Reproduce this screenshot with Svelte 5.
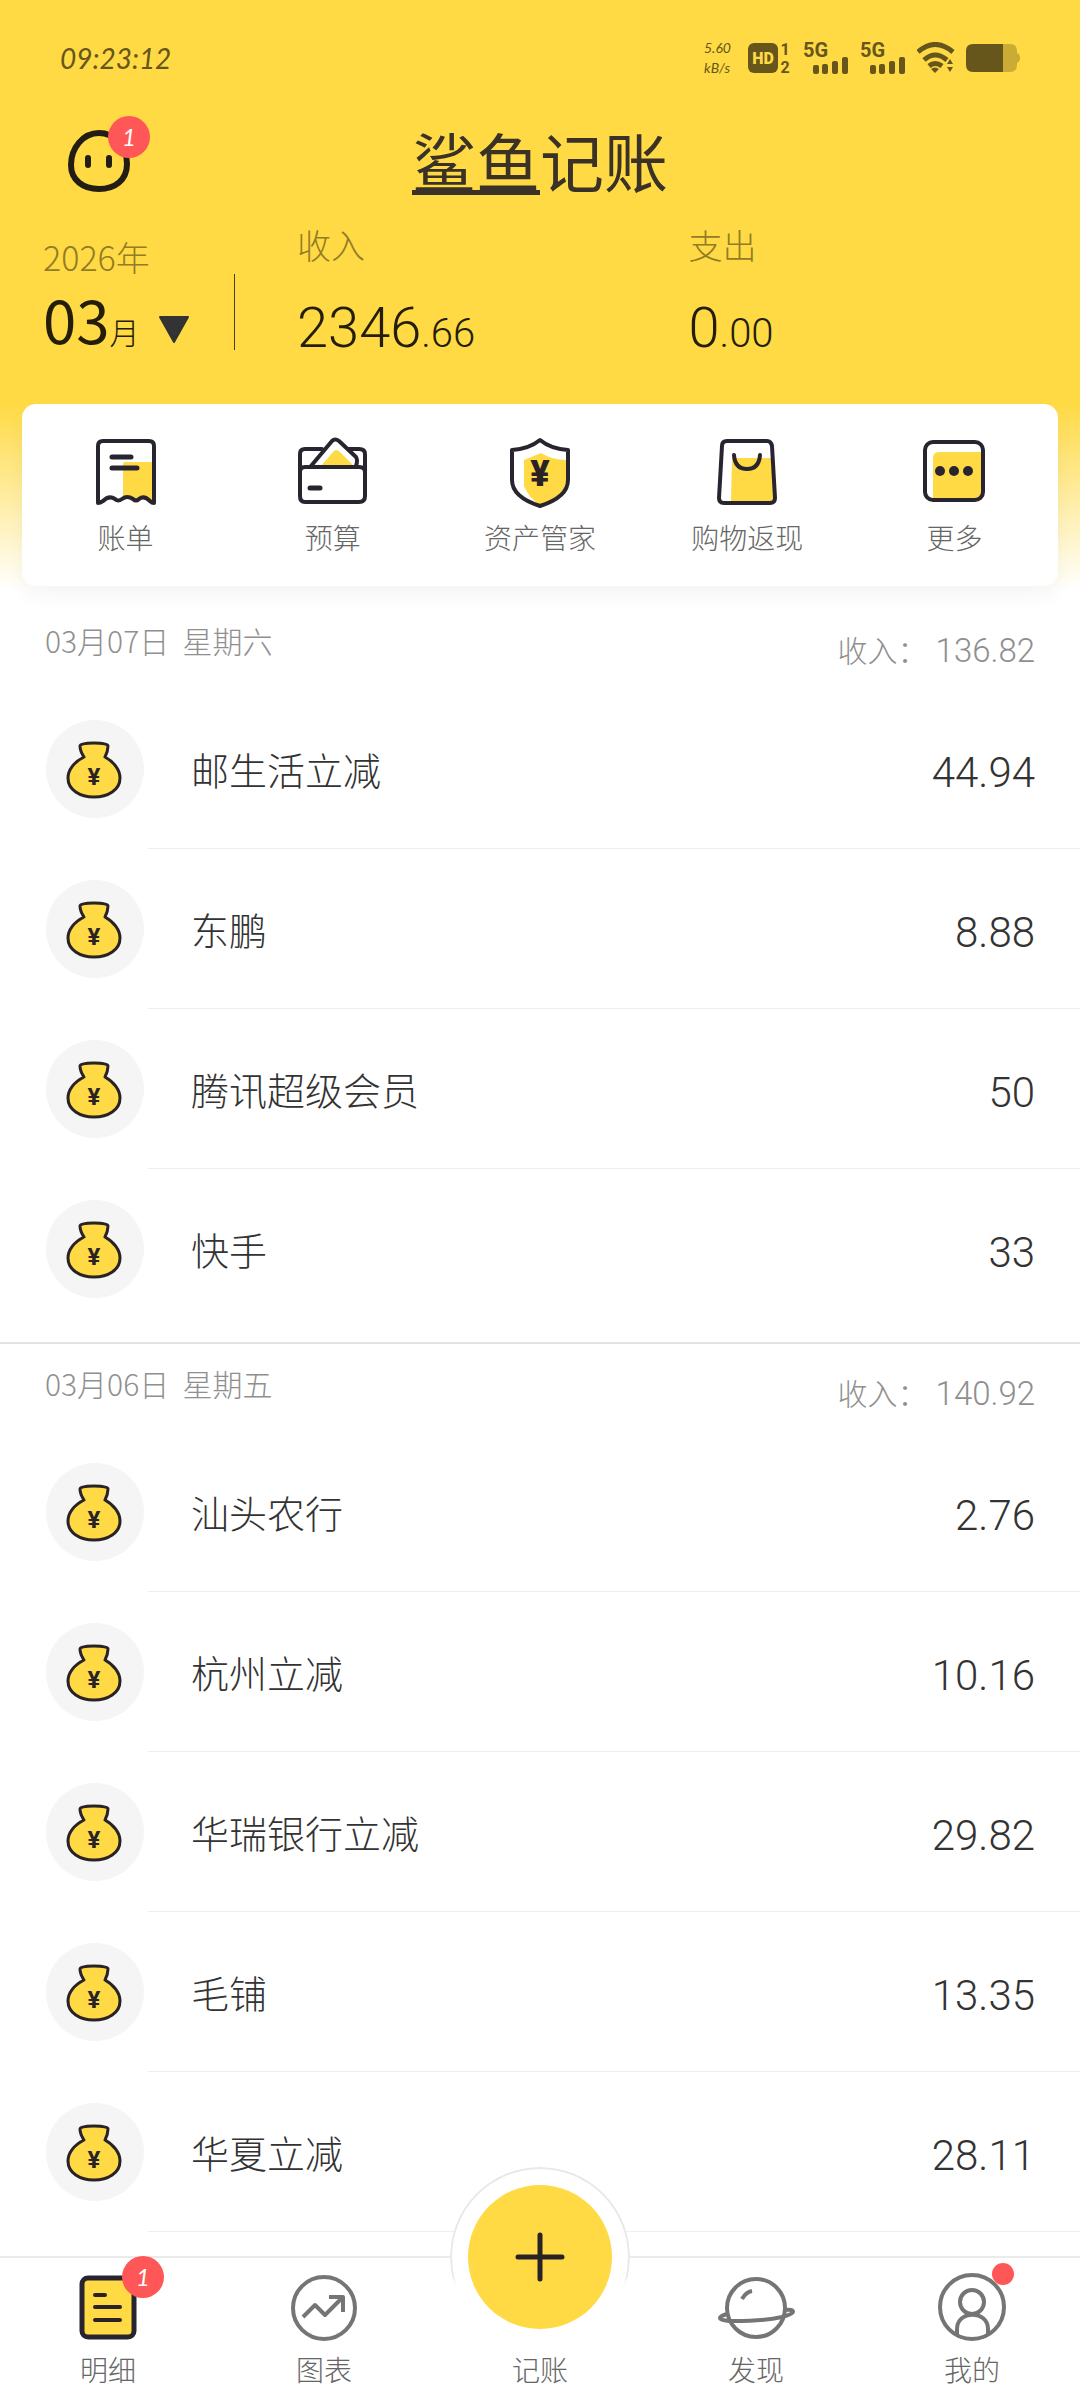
<script lang="ts">
	type Entry = { name: string; amount: string };
	type Day = { date: string; weekday: string; income: string; entries: Entry[] };

	let activeTab = $state('明细');

	const shortcuts = ['账单', '预算', '资产管家', '购物返现', '更多'];
	const tabs = ['明细', '图表', '记账', '发现', '我的'];

	const days: Day[] = [
		{
			date: '03月07日',
			weekday: '星期六',
			income: '136.82',
			entries: [
				{ name: '邮生活立减', amount: '44.94' },
				{ name: '东鹏', amount: '8.88' },
				{ name: '腾讯超级会员', amount: '50' },
				{ name: '快手', amount: '33' }
			]
		},
		{
			date: '03月06日',
			weekday: '星期五',
			income: '140.92',
			entries: [
				{ name: '汕头农行', amount: '2.76' },
				{ name: '杭州立减', amount: '10.16' },
				{ name: '华瑞银行立减', amount: '29.82' },
				{ name: '毛铺', amount: '13.35' },
				{ name: '华夏立减', amount: '28.11' }
			]
		}
	];
</script>

{#snippet signal()}
	<svg class="signal" viewBox="0 0 46 44" aria-hidden="true">
		<text x="0" y="21" class="sim">5G</text>
		<rect x="10" y="29" width="6" height="9" rx="2" />
		<rect x="19" y="28" width="6" height="10" rx="2" />
		<rect x="29" y="25" width="6" height="13" rx="2" />
		<rect x="39" y="21" width="6" height="17" rx="2" />
	</svg>
{/snippet}

<div class="app">
	<header class="hero">
		<div class="status">
			<time>09:23:12</time>
			<div class="status-icons">
				<div class="speed"><span>5.60</span><span>kB/s</span></div>
				<svg class="hd" viewBox="0 0 44 44" aria-hidden="true">
					<rect x="0" y="7" width="30" height="30" rx="6" />
					<text x="15" y="28" class="hd-label" text-anchor="middle">HD</text>
					<text x="37" y="19" class="sim-no" text-anchor="middle">1</text>
					<text x="37" y="37" class="sim-no" text-anchor="middle">2</text>
				</svg>
				{@render signal()}
				{@render signal()}
				<svg class="wifi" viewBox="0 0 38 32" aria-hidden="true">
					<g fill="none" stroke="currentColor" stroke-width="5">
						<path d="M1 10 Q18 -5 36 10" />
						<path d="M7 18 Q18 8 30 18" />
						<path d="M12 24 Q18 19 25 24" />
					</g>
					<path d="M14 27 Q18 24 22 27 L18 31 Z" />
					<path d="M30 22 L33 17 L36 22 Z M30 25 L33 30 L36 25 Z" />
				</svg>
				<svg class="battery" viewBox="0 0 54 28" aria-hidden="true">
					<path opacity="0.35" d="M37 0 H44 Q51 0 51 7 V9 Q54 10 54 14 Q54 18 51 19 V21 Q51 28 44 28 H37 Z" />
					<path d="M7 0 H37 V28 H7 Q0 28 0 21 V7 Q0 0 7 0 Z" />
				</svg>
			</div>
		</div>

		<div class="title-bar">
			<button class="face" aria-label="消息">
				<svg viewBox="0 0 62 62" aria-hidden="true">
					<path d="M31 3 C46 3 59 16 59 34 C59 50 47 59 31 59 C15 59 3 50 3 35 C3 18 15 3 31 3 Z" fill="none" stroke="#231d14" stroke-width="6" />
					<rect x="17" y="25" width="6" height="13" rx="3" fill="#231d14" />
					<rect x="38" y="25" width="6" height="13" rx="3" fill="#231d14" />
				</svg>
				<span class="badge">1</span>
			</button>
			<h1><span class="shark">鲨鱼</span>记账</h1>
		</div>

		<div class="summary">
			<button class="month">
				<span class="year">2026年</span>
				<span class="month-value">
					<span class="month-no">03</span>
					<span class="month-unit">月</span>
					<svg class="caret" viewBox="0 0 32 28" aria-hidden="true">
						<path d="M2 1 H30 L16 26 Z" fill="#333" stroke="#333" stroke-width="2" stroke-linejoin="round" />
					</svg>
				</span>
			</button>
			<div class="total">
				<span class="total-label">收入</span>
				<span class="total-value">2346<small>.66</small></span>
			</div>
			<div class="total">
				<span class="total-label">支出</span>
				<span class="total-value">0<small>.00</small></span>
			</div>
		</div>

		<nav class="shortcuts">
			{#each shortcuts as label, i}
				<button class="shortcut">
					<svg viewBox="0 0 72 72" aria-hidden="true">
						{#if i === 0}
							<path d="M33 27 Q33 25 35 25 H63 V62 L58 64 L53 60 L46 64 L39 60 L33 63 Z" class="fill" />
							<path d="M8 66 V9 Q8 4 13 4 H59 Q64 4 64 9 V66 Q62 66 60 64 Q54 58 49 62 Q46 65 43 62 Q37 58 32 62 Q28 65 25 62 Q19 58 13 64 Q10 66 8 66 Z" class="line" />
							<path d="M22 20 H41 M22 31 H47" class="line thick" />
						{:else if i === 1}
							<path d="M24 29 L36 15 Q39 11 43 15 L57 29 Z" class="fill" />
							<path d="M25 12 H8 Q3 12 3 17 V59 Q3 65 8 65 H62 Q68 65 68 59 V17 Q68 12 62 12 H52" class="line" />
							<path d="M14 29 L35 4 Q38 1 42 4 L59 20 Q61 23 59 29" class="line" />
							<path d="M3 35 Q3 30 8 30 H62 Q68 30 68 35" class="line" />
							<path d="M13 51 H23" class="line thick" />
						{:else if i === 2}
							<path d="M20 23 Q32 18 37 16 Q48 23 62 23 V45 Q58 61 37 69 Q24 60 20 49 Z" class="fill" />
							<path d="M36 3 Q25 12 8 13 V43 Q8 60 36 69 Q64 60 64 43 V13 Q47 12 36 3 Z" class="line" />
							<text x="36" y="49" class="yen shield-yen" text-anchor="middle">¥</text>
						{:else if i === 3}
							<path d="M21 21 H60 L63 64 H20 Z" class="fill" />
							<path d="M16 4 H56 Q60 4 61 9 L64 61 Q64 66 59 66 H13 Q8 66 8 61 L11 9 Q11 4 16 4 Z" class="line" />
							<path d="M23 18 Q24 32 36 32 Q48 32 49 18" class="line" />
						{:else}
							<path d="M15 63 V21 Q15 15 21 15 H64 V63 Z" class="fill" />
							<rect x="7" y="5" width="58" height="58" rx="8" class="line" />
							<g fill="#292530">
								<circle cx="22" cy="34" r="5" />
								<circle cx="36" cy="34" r="5" />
								<circle cx="50" cy="34" r="5" />
							</g>
						{/if}
					</svg>
					<span>{label}</span>
				</button>
			{/each}
		</nav>
	</header>

	<main>
		{#each days as day}
			<section class="day">
				<div class="day-head">
					<h2>{day.date}&nbsp; {day.weekday}</h2>
					<p><span>收入：</span>{day.income}</p>
				</div>
				<ul>
					{#each day.entries as entry}
						<li>
							<svg class="bag" viewBox="0 0 98 98" aria-hidden="true">
								<circle cx="49" cy="49" r="49" fill="#f5f5f5" />
								<path d="M38 37 Q34 31 34 26 Q34 23 48 23 Q62 23 62 26 Q62 31 59 37 C68 42 74 50 74 58 C74 70 62 77 48 77 C34 77 22 70 22 58 C22 50 28 42 38 37 Z" fill="#ffda44" stroke="#292326" stroke-width="3" stroke-linejoin="round" />
								<text x="48" y="65" class="yen" text-anchor="middle">¥</text>
							</svg>
							<div class="entry">
								<span class="entry-name">{entry.name}</span>
								<span class="entry-amount">{entry.amount}</span>
							</div>
						</li>
					{/each}
				</ul>
			</section>
		{/each}
	</main>

	<nav class="tabs">
		{#each tabs as tab, i}
			<button class="tab" aria-current={activeTab === tab ? 'page' : undefined} onclick={() => (activeTab = tab)}>
				<span class="tab-icon">
					{#if i === 0}
						<svg viewBox="0 0 80 70" aria-hidden="true">
							<rect x="14" y="5" width="52" height="59" rx="6" fill="#ffda44" stroke="#292530" stroke-width="5" />
							<path d="M27 22 H37 M27 34 H52 M27 47 H52" fill="none" stroke="#292326" stroke-width="4" stroke-linecap="round" />
						</svg>
						<span class="badge">1</span>
					{:else if i === 1}
						<svg viewBox="0 0 80 70" class="outline" aria-hidden="true">
							<circle cx="40" cy="35" r="31" />
							<path d="M19 44 L31 32 L41 42 L58 25 M45 24 H59 V39" />
						</svg>
					{:else if i === 2}
						<span class="add-ring"></span>
						<span class="add">
							<svg viewBox="0 0 52 52" aria-hidden="true">
								<path d="M4 26 H48 M26 4 V48" fill="none" stroke="#292326" stroke-width="5" stroke-linecap="round" />
							</svg>
						</span>
					{:else if i === 3}
						<svg viewBox="0 0 80 70" class="outline" aria-hidden="true">
							<circle cx="40" cy="35" r="29" />
							<path d="M26 26 Q30 19 36 18" />
							<path d="M11 41 Q4 43 4 45 Q4 48 18 48 Q48 48 66 44 Q77 41 77 39 Q77 36 69 37" />
						</svg>
					{:else}
						<svg viewBox="0 0 80 70" class="outline" aria-hidden="true">
							<circle cx="40" cy="34" r="32" />
							<circle cx="40" cy="29" r="12" />
							<path d="M25 61 V56 C25 37 56 37 56 56 V61" />
						</svg>
						<span class="dot"></span>
					{/if}
				</span>
				<span class="tab-label">{tab}</span>
			</button>
		{/each}
	</nav>
</div>

<style>
	:global(body) {
		margin: 0;
		background: #fff;
	}

	.app {
		display: flex;
		flex-direction: column;
		min-height: 100vh;
		font-family: 'Noto Sans CJK SC', sans-serif;
		font-weight: 300;
		color: #333;
	}

	button {
		padding: 0;
		border: 0;
		background: none;
		color: inherit;
		font: inherit;
		cursor: pointer;
	}

	svg {
		display: block;
		flex: none;
	}

	.hero {
		padding-bottom: 15px;
		background: linear-gradient(#ffda44 404px, #fff 590px);
	}

	.status {
		display: flex;
		justify-content: space-between;
		align-items: center;
		height: 116px;
		padding: 0 60px;
		color: #66561b;
		fill: currentColor;
	}

	time {
		font-family: Lato, sans-serif;
		font-size: 28px;
		font-style: italic;
		font-weight: 400;
	}

	.status-icons {
		display: flex;
		align-items: center;
		gap: 11px;
	}

	.speed {
		display: flex;
		flex-direction: column;
		margin-right: 6px;
		font-family: Lato, sans-serif;
		font-size: 14px;
		font-style: italic;
		font-weight: 400;
		line-height: 20px;
	}

	.hd {
		width: 44px;
		height: 44px;
		overflow: visible;
	}

	.signal {
		width: 46px;
		height: 44px;
		overflow: visible;
	}

	.wifi {
		width: 38px;
		height: 32px;
	}

	.battery {
		width: 54px;
		height: 28px;
	}

	.sim,
	.sim-no,
	.hd-label {
		font-family: Roboto, sans-serif;
		font-size: 20px;
		font-weight: 700;
	}

	.sim-no {
		font-size: 16px;
	}

	.hd-label {
		font-size: 16px;
		font-weight: 900;
		fill: #ffda44;
	}

	.title-bar {
		display: grid;
		grid-template-columns: 1fr auto 1fr;
		align-items: center;
		height: 90px;
		padding: 0 68px;
	}

	.face {
		position: relative;
		width: 62px;
		height: 62px;
	}

	.badge {
		position: absolute;
		top: -14px;
		right: -20px;
		width: 42px;
		height: 42px;
		border-radius: 50%;
		background: #ff5757;
		color: #fff;
		font-family: Lato, sans-serif;
		font-size: 24px;
		font-style: italic;
		font-weight: 400;
		line-height: 42px;
		text-align: center;
	}

	h1 {
		margin: 0;
		color: #3a3226;
		font-size: 64px;
		font-weight: 400;
		line-height: 64px;
	}

	.shark {
		display: inline-block;
		border-bottom: 5px solid #3a3226;
		line-height: 62px;
	}

	.summary {
		display: flex;
		align-items: flex-end;
		height: 148px;
		padding-bottom: 50px;
	}

	.month {
		display: flex;
		flex-direction: column;
		position: relative;
		gap: 9px;
		width: 297px;
		padding-left: 43px;
		box-sizing: border-box;
		color: #231d0a;
		text-align: left;
	}

	.month::after {
		content: '';
		position: absolute;
		right: 62px;
		bottom: 4px;
		width: 1px;
		height: 76px;
		background: #4a3f17;
	}

	.year,
	.total-label {
		color: #927c26;
		font-size: 34px;
		line-height: 32px;
	}

	.month-value {
		display: flex;
		align-items: baseline;
		line-height: 72px;
	}

	.month-no {
		font-size: 60px;
		font-weight: 400;
	}

	.month-unit {
		margin-right: 18px;
		font-size: 30px;
		line-height: 40px;
	}

	.caret {
		width: 32px;
		height: 28px;
	}

	.total {
		display: flex;
		flex: 1;
		flex-direction: column;
		gap: 41px;
	}

	.total-value {
		color: #231d0a;
		font-family: Roboto, sans-serif;
		font-size: 56px;
		line-height: 52px;
	}

	.total-value small {
		font-size: 40px;
		line-height: 40px;
	}

	.shortcuts {
		display: flex;
		margin: 0 22px;
		border-radius: 14px;
		background: #fff;
		box-shadow: 0 10px 20px rgba(0, 0, 0, 0.04);
	}

	.shortcut {
		display: flex;
		flex: 1;
		flex-direction: column;
		align-items: center;
		gap: 8px;
		height: 182px;
		padding-top: 33px;
		box-sizing: border-box;
		color: #666;
		font-size: 28px;
		line-height: 40px;
	}

	.shortcut svg {
		width: 72px;
		height: 72px;
	}

	.fill {
		fill: #ffda44;
	}

	.line {
		fill: none;
		stroke: #292530;
		stroke-width: 4;
		stroke-linecap: round;
		stroke-linejoin: round;
	}

	.thick {
		stroke-width: 5;
	}

	.yen {
		fill: #292326;
		font-family: Roboto, sans-serif;
		font-size: 24px;
		font-weight: 700;
	}

	.shield-yen {
		font-size: 36px;
		font-weight: 900;
	}

	main {
		flex: 1;
	}

	.day + .day {
		border-top: 2px solid #e2e2e2;
	}

	.day:not(:last-child) {
		padding-bottom: 13px;
	}

	.day-head {
		display: flex;
		justify-content: space-between;
		height: 88px;
		padding: 19px 45px 0;
		box-sizing: border-box;
		color: #8f8f8f;
		line-height: 40px;
	}

	h2 {
		margin: 0;
		font-size: 30px;
		font-weight: 300;
	}

	.day-head p {
		margin: 9px 0 0;
		font-family: Roboto, sans-serif;
		font-size: 33px;
	}

	.day-head p span {
		margin-right: 8px;
		font-family: 'Noto Sans CJK SC', sans-serif;
		font-size: 30px;
	}

	ul {
		margin: 0;
		padding: 0;
		list-style: none;
	}

	li {
		display: flex;
		align-items: center;
		gap: 4px;
		height: 160px;
		padding-left: 46px;
	}

	.bag {
		width: 98px;
		height: 98px;
	}

	.entry {
		display: flex;
		flex: 1;
		justify-content: space-between;
		align-items: center;
		height: 100%;
		padding: 0 45px 0 43px;
		border-bottom: 1px solid #efefef;
		box-sizing: border-box;
	}

	.day:not(:last-child) li:last-child .entry {
		border-bottom-color: transparent;
	}

	.entry-name {
		font-size: 38px;
		line-height: 56px;
	}

	.entry-amount {
		padding-top: 8px;
		font-family: Roboto, sans-serif;
		font-size: 42px;
	}

	.tabs {
		display: flex;
		position: sticky;
		bottom: 0;
		height: 144px;
		border-top: 2px solid #ebebeb;
		box-sizing: border-box;
		background: #fff;
	}

	.tab {
		display: flex;
		flex: 1;
		flex-direction: column;
		align-items: center;
		gap: 6px;
		padding-top: 15px;
		color: #666;
	}

	.tab-icon {
		position: relative;
		width: 80px;
		height: 70px;
	}

	.tab-icon > svg {
		width: 80px;
		height: 70px;
	}

	.tab-icon .badge {
		top: -17px;
		right: -16px;
	}

	.outline {
		fill: none;
		stroke: #757575;
		stroke-width: 4;
		stroke-linejoin: round;
	}

	.dot {
		position: absolute;
		top: -10px;
		right: -2px;
		width: 22px;
		height: 22px;
		border-radius: 50%;
		background: #ff5757;
	}

	.tab-label {
		position: relative;
		font-size: 28px;
		line-height: 40px;
	}

	/* raised button that breaks through the bar's top edge */
	.add-ring {
		position: absolute;
		top: -106px;
		left: -50px;
		width: 180px;
		height: 180px;
		border: 2px solid #e8e8e8;
		border-radius: 50%;
		box-sizing: border-box;
		background: #fff;
		mask-image: linear-gradient(#000 60%, transparent 66%);
	}

	.add {
		display: flex;
		position: absolute;
		top: -88px;
		left: -32px;
		align-items: center;
		justify-content: center;
		width: 144px;
		height: 144px;
		border-radius: 50%;
		background: #ffda44;
	}

	.add svg {
		width: 52px;
		height: 52px;
	}
</style>
